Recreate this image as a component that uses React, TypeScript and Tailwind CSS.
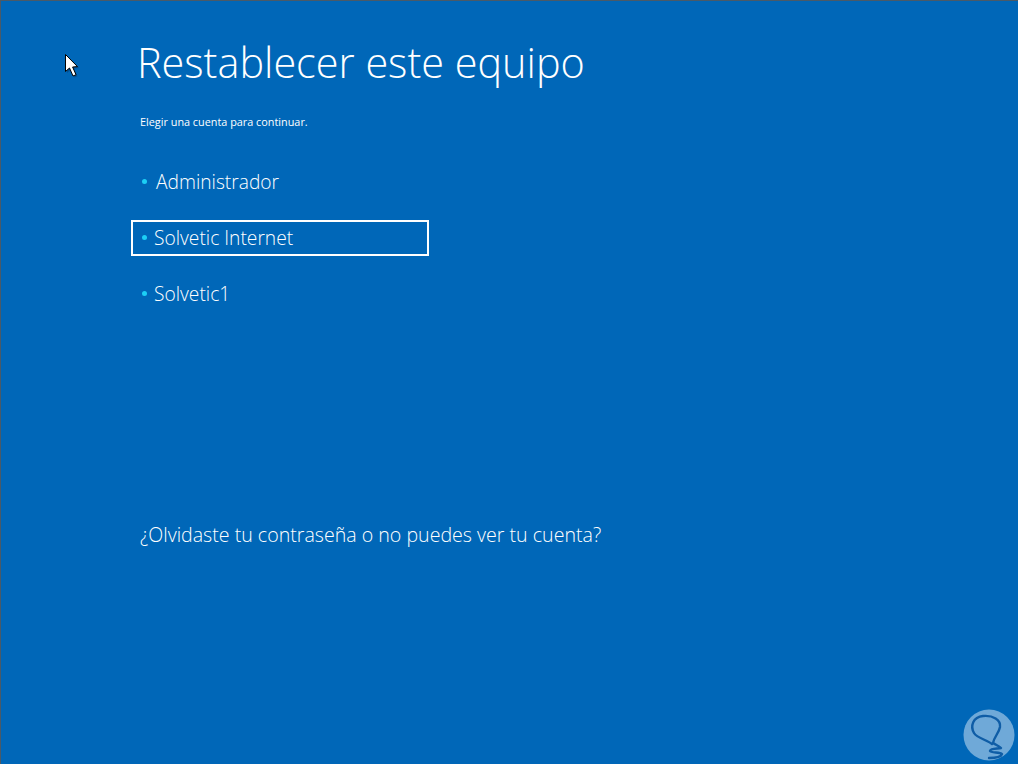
const accounts = ['Administrador', 'Solvetic Internet', 'Solvetic1']

function Cursor() {
  return (
    <svg width="18" height="26" viewBox="0 0 18 26" className="absolute left-[63px] top-[52px]">
      <path d="M1.5 1.5 L1.5 18.5 L5.5 15 L9 23 L12 21.7 L8.6 14 L13.5 13.6 Z" fill="#0a2f55" opacity="0.4" transform="translate(1.5 1.5)" />
      <path d="M1.5 1.5 L1.5 18.5 L5.5 15 L9 23 L12 21.7 L8.6 14 L13.5 13.6 Z" fill="#fff" stroke="#000" strokeWidth="1" />
    </svg>
  )
}

function Logo() {
  return (
    <svg width="52" height="52" viewBox="0 0 52 52" className="absolute left-[962px] top-[708px]">
      <circle cx="26" cy="26" r="25.5" fill="#6fa9d8" />
      <path
        d="M29 35 C24 31 14 29 11 24 C7 17 10 8 20 7 C30 6 38 11 37 18 C36 24 31 28 30 34 C33 36 36 37 38 39 C35 40 28 39 27 42 C28 44 37 43 39 45 C38 48 31 49 26 49"
        fill="none"
        stroke="#0f5da6"
        strokeWidth="2.4"
        strokeLinecap="round"
        strokeLinejoin="round"
      />
    </svg>
  )
}

export default function App() {
  return (
    <div className="relative w-[1018px] h-[764px] overflow-hidden bg-[#0067b8] text-white border-l border-t border-[#4a5a68] font-['Open_Sans',sans-serif]">
      <Cursor />
      <div className="pl-[136px] pt-[33px] flex flex-col items-start">
        <h1 className="text-[41.4px] leading-[56px] font-light">Restablecer este equipo</h1>
        <p className="mt-[25px] ml-[3px] text-[10.85px] leading-[14px]">Elegir una cuenta para continuar.</p>
        <ul className="mt-[35px] -ml-[6px] flex flex-col gap-[20px]">
          {accounts.map((name, i) => (
            <li
              key={name}
              className={`w-[298px] h-[36px] flex items-center pl-[9px] gap-[7px] text-[19.2px] font-light border-2 ${
                i === 1 ? 'border-white' : 'border-transparent'
              }`}
            >
              <span className="w-[5px] h-[5px] rounded-full bg-[#1ccff5] -mt-[2px]" />
              <span className={i === 0 ? 'ml-[2px]' : ''}>{name}</span>
            </li>
          ))}
        </ul>
        <p className="mt-[210px] ml-[3px] text-[19.6px] leading-[26px] font-light">¿Olvidaste tu contraseña o no puedes ver tu cuenta?</p>
      </div>
      <Logo />
    </div>
  )
}
